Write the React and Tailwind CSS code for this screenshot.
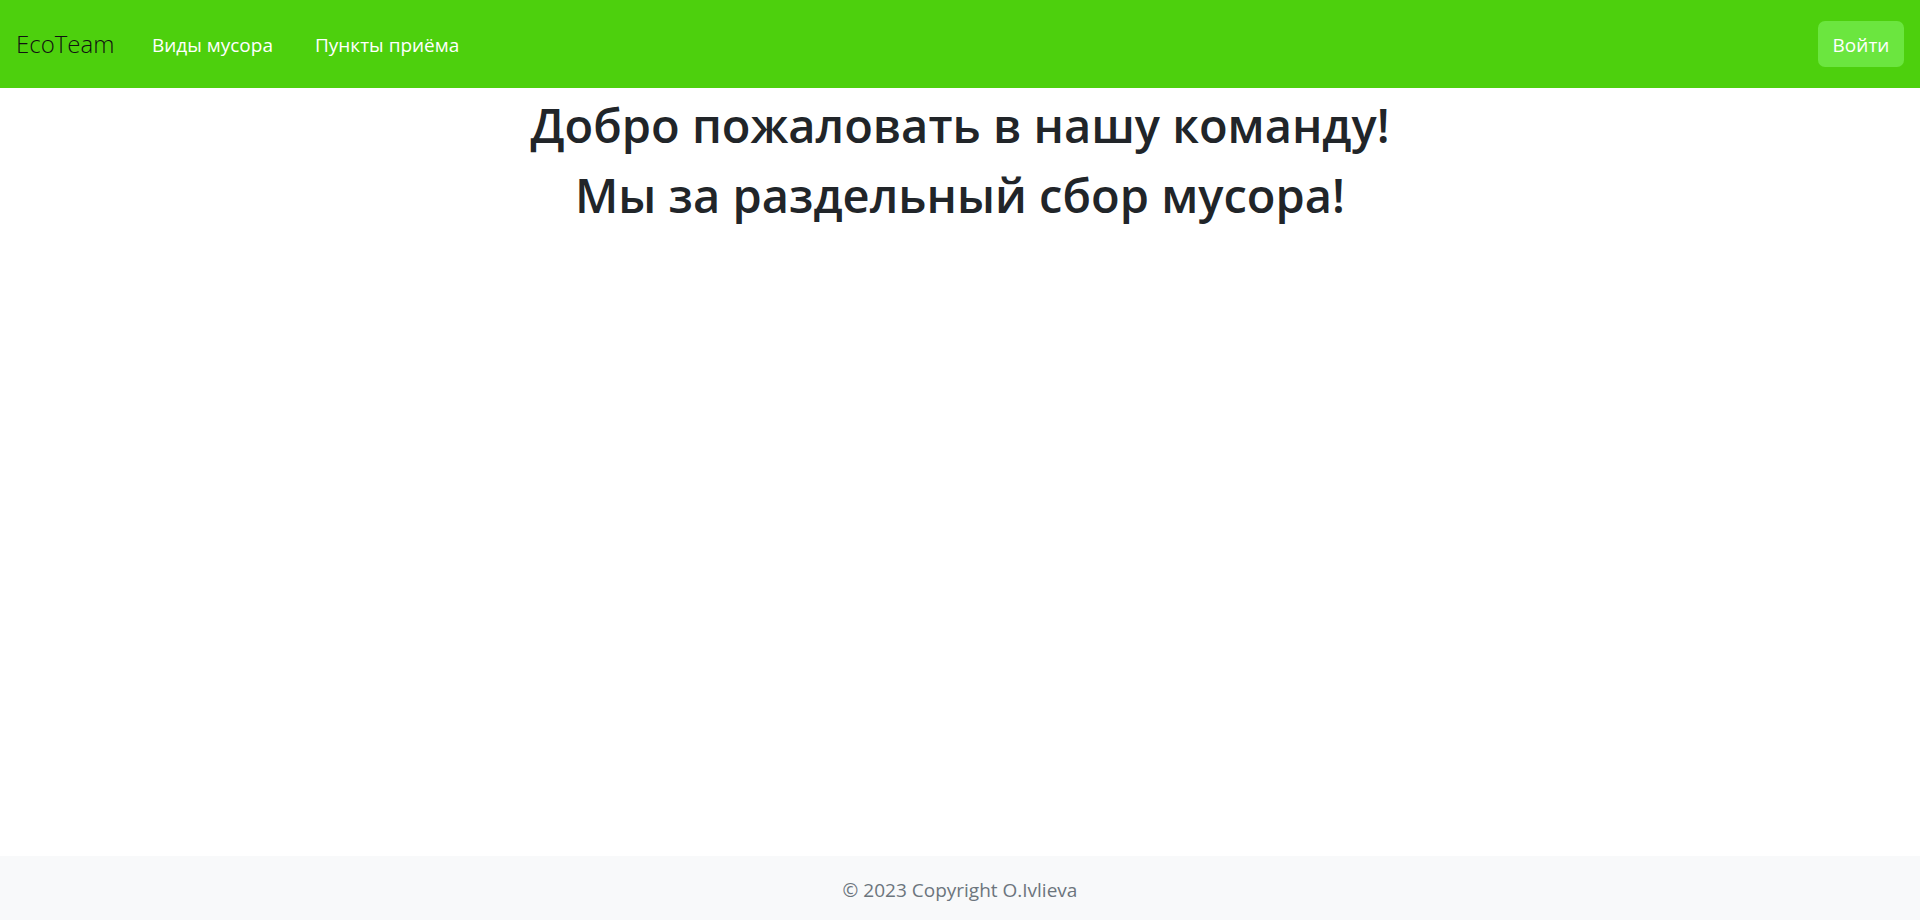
export default function App() {
  return (
    <div className="flex min-h-screen flex-col bg-white font-['Open_Sans','Noto_Sans',sans-serif]">
      <nav className="flex h-[88px] items-center justify-between bg-[#4dd00d] pl-[16px] pr-[16px]">
        <div className="flex items-center">
          <a href="#" className="w-[136px] text-[24px] font-light leading-[30px] text-[#111]">
            EcoTeam
          </a>
          <div className="flex items-center gap-[42px] pt-[2px] text-[19px] leading-[30px] text-white">
            <a href="#">Виды мусора</a>
            <a href="#">Пункты приёма</a>
          </div>
        </div>
        <button className="h-[46px] w-[86px] rounded-[7px] bg-[#6be63f] pt-[2px] text-[19px] text-white">
          Войти
        </button>
      </nav>

      <main className="flex-1 pt-[7px] text-center text-[#212529]">
        <h1 className="mb-[10px] text-[47px] font-semibold leading-[60px]">
          Добро пожаловать в нашу команду!
        </h1>
        <h1 className="mb-[10px] text-[47px] font-semibold leading-[60px]">
          Мы за раздельный сбор мусора!
        </h1>
      </main>

      <footer className="h-[64px] bg-[#f8f9fa] pt-[19px] text-center text-[19px] leading-[30px] text-[#6c757d]">
        © 2023 Copyright O.Ivlieva
      </footer>
    </div>
  )
}
